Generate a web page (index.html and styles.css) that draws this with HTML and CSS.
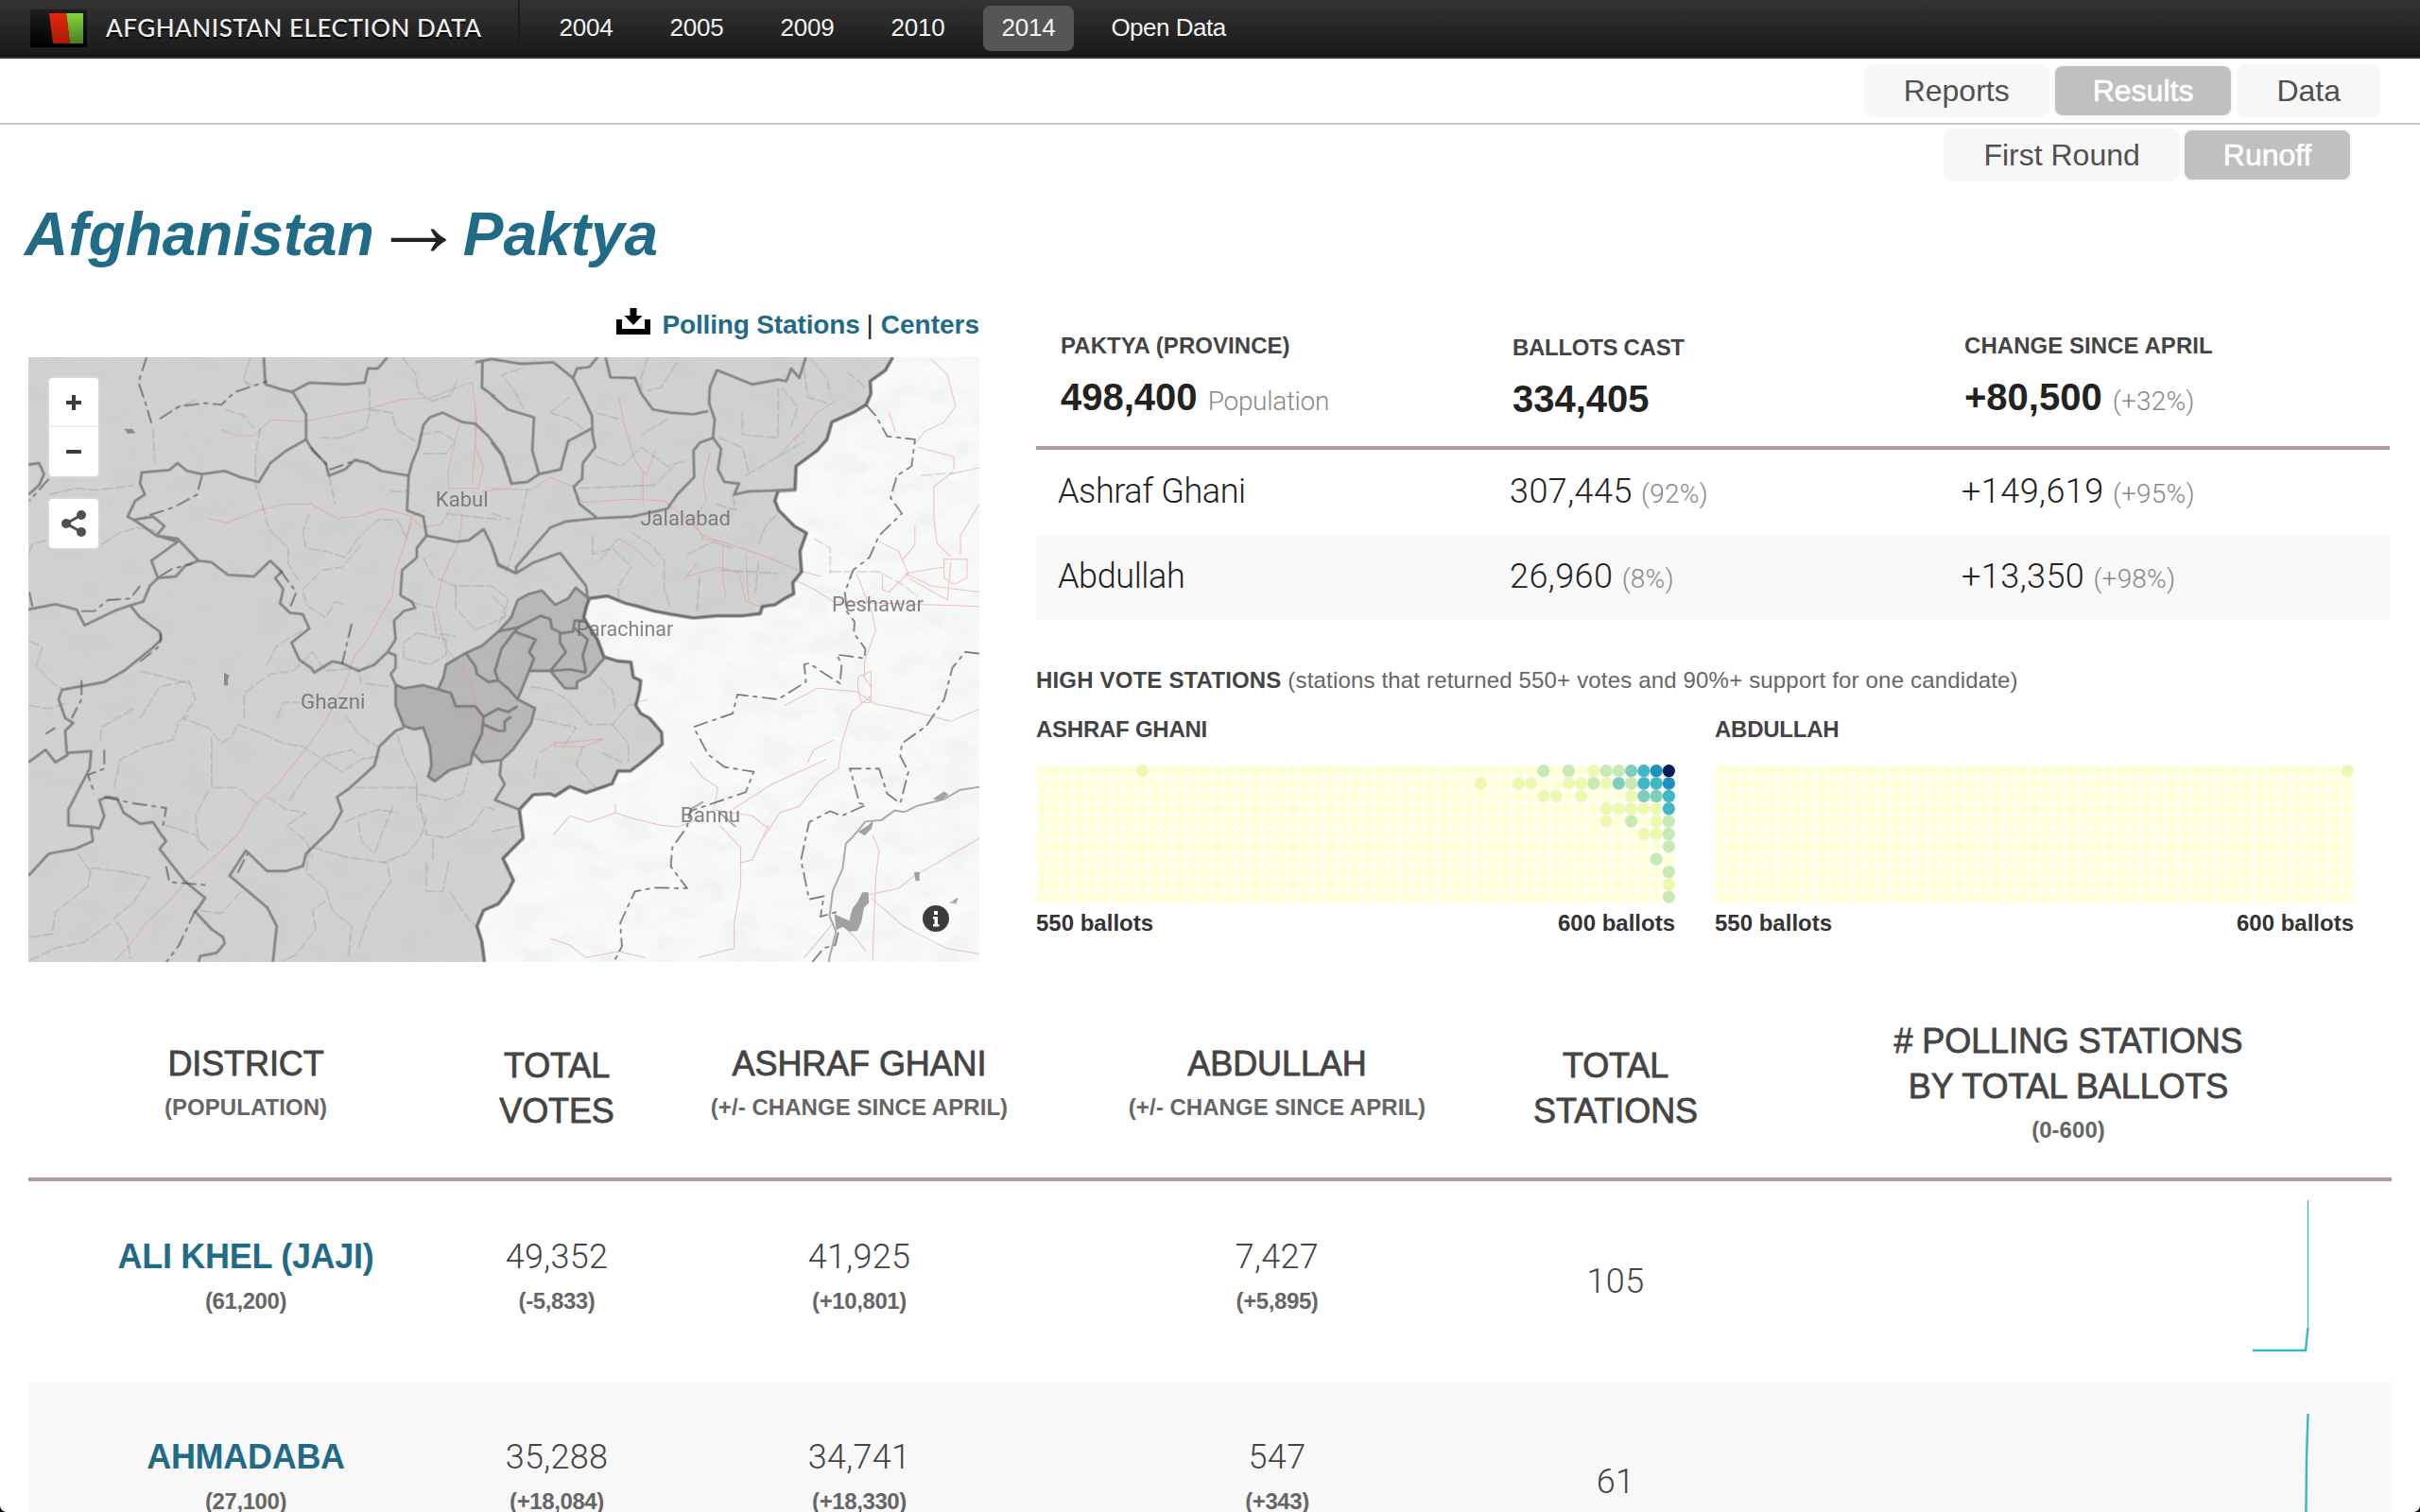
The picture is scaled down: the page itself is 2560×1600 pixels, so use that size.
FILE: index.html
```html
<!DOCTYPE html>
<html lang="en">
<head>
<meta charset="utf-8">
<title>Afghanistan Election Data</title>
<link rel="stylesheet" href="styles.css">
</head>
<body>
<header class="topbar">
  <a class="brand">
    <svg class="brand-logo" viewBox="0 0 60 40">
      <defs>
        <linearGradient id="k" x2="0" y2="1"><stop stop-color="#1e1e1e"/><stop offset="1" stop-color="#000"/></linearGradient>
        <linearGradient id="r" x2="0" y2="1"><stop stop-color="#e3260c"/><stop offset="1" stop-color="#ab1a06"/></linearGradient>
        <linearGradient id="g" x2="0" y2="1"><stop stop-color="#82d738"/><stop offset="1" stop-color="#4b7c25"/></linearGradient>
      </defs>
      <rect width="60" height="40" fill="url(#k)"/><path d="M38 4h18v32H42z" fill="url(#g)"/><path d="M20 4h18l4 32H24z" fill="url(#r)"/>
    </svg>
    <span class="brand-name">AFGHANISTAN ELECTION DATA</span>
  </a>
  <nav class="years">
    <a>2004</a><a>2005</a><a>2009</a><a>2010</a><a class="current">2014</a><a class="open">Open Data</a>
  </nav>
</header>
<nav class="tabs tabs-main"><a>Reports</a><a class="on">Results</a><a>Data</a></nav>
<nav class="tabs tabs-round"><a>First Round</a><a class="on">Runoff</a></nav>
<h1 class="crumbs"><a>Afghanistan</a><span class="arrow">→</span><a>Paktya</a></h1>
<main class="overview">
  <section class="map-col">
    <div class="downloads">
      <svg class="dl-icon" viewBox="0 0 36 28"><path d="M0 12h6v10h24V12h6v16H0z"/><path d="M14.500 0h7v8h6L18 18 8.500 8h6z"/></svg>
      <a>Polling Stations</a><span class="bar">|</span><a class="centers">Centers</a>
    </div>
    <div class="map">
      <svg class="map-art" viewBox="87 204 2921 1920" preserveAspectRatio="none">
        <defs>
          <filter id="relief" x="0" y="0" width="100%" height="100%">
            <feTurbulence type="fractalNoise" baseFrequency="0.009 0.014" numOctaves="4" seed="8"/>
            <feColorMatrix values="0 0 0 0 .35  0 0 0 0 .37  0 0 0 0 .37  .7 .5 0 0 -.5"/>
          </filter>
        </defs>
        <rect x="87" y="204" width="2921" height="1920" fill="#f8f9f9"/>
        <rect x="87" y="204" width="2921" height="1920" filter="url(#relief)" opacity=".2"/>
        <path class="country" d="M87 204H2742L2720 245 2673 280 2675 320 2660 355 2620 380 2555 410 2540 465 2510 500 2445 550 2442 625 2390 628 2380 660 2392 690 2440 740 2477 762 2457 820 2462 885 2435 920 2438 955 2410 970 2380 990 2342 995 2335 1018 2280 1025 2200 1025 2130 1032 2060 1020 2010 1010 1960 995 1920 985 1865 962 1810 970 1800 1000 1793 1030 1810 1060 1835 1100 1855 1155 1895 1168 1938 1172 1945 1220 1968 1230 1965 1260 1953 1310 1968 1335 1995 1350 2032 1395 2034 1432 2000 1465 1965 1495 1935 1518 1898 1517 1880 1558 1800 1587 1750 1567 1705 1597 1690 1590 1638 1593 1595 1640 1607 1730 1545 1795 1577 1865 1560 1900 1530 1940 1485 1960 1465 2010 1480 2060 1488 2124H87z"/>
        <path class="province" d="M1215 1243L1240 1255 1300 1245 1345 1258 1362 1220 1370 1180 1430 1143 1480 1120 1530 1075 1570 1030 1590 975 1625 955 1665 945 1705 990 1745 970 1768 935 1808 970 1793 1030 1835 1100 1855 1160 1810 1215 1772 1235 1772 1250 1735 1255 1690 1200 1625 1200 1590 1290 1643 1318 1630 1370 1575 1450 1540 1483 1480 1490 1452 1460 1445 1495 1380 1515 1335 1550 1315 1535 1325 1500 1320 1440 1300 1380 1270 1385 1240 1375 1215 1310z"/>
        <path class="haze" d="M1215 1243L1240 1255 1300 1245 1345 1258 1385 1270 1400 1312 1460 1312 1485 1345 1480 1400 1452 1460 1445 1495 1380 1515 1335 1550 1315 1535 1325 1500 1320 1440 1300 1380 1270 1385 1240 1375 1215 1310z"/>

        <g class="road">
          <path d="M680 435l50 18 50 0 50-50 100 5 100-20 100-20 100-30 90-5 130-50 15 120-15 200M1410 420l-35 150 5 50 90 0 15-70-25-60 0-120M1480 630l90-10"/>
          <path d="M635 715l60 15 100-40 80-20 80 0 80 45 60-5 80-25 80 20 40 40 60-10 30-50M1420 700l-10 90-50 110-20 100 25 120 65 90 30 80 0 60 70 60"/>
          <path d="M1265 730L1215 880 1205 960 1130 1100 1085 1160 1060 1240 1000 1360 930 1460 850 1560 780 1630 730 1720 660 1790 580 1860 520 1930 440 2010 400 2070 350 2120M1250 770l15-60 40-20"/>
          <g transform="translate(1510 0)">
            <path d="M0 620l120 5 60-40 70 30 30 50 140-10 110 5 60 50 60 60 200 70 90 40 70 20M390 330l20 100 30 100 35 50 30-90M465 570v100M670 510l-20 90 10 60-40 60 30 60 60 10 0 120 10 60M600 900l100-30 60 20 20 90 60 20M590 910l40-50M780 830l10 150M930 470l70-90 60-40M880 520l60-70M330 850l60-70 50 30 60 60M930 910l60 30 60 40 450 15M1350 210l50 50 25 100-35 50-60 30-30 40M1220 380l20 60M1310 490l110 30v40M1498 555l-90 20-50 40 0 100 10 80 40 40M1440 830l0-60 58-100M1190 790l60 30 30 70-60 60-20-10 0-50M1300 740v60l-40 50M1120 890l50 130 5 30M1390 845h70v60l-40 20-30-20zM1270 890l120-20M1270 890l80 40 150 20M1280 905l120 70 10-120"/>
            <path d="M900 1310l100-55 120 10 60 40 100 20 130 35 90-40M1175 1050l5 20-35 100 0 50 20 30 0 30-60 50-30 100-10 80-60 40-60 80-60 20-50 80M1050 1420l-60 30-20 40M610 1490l40 50 45 30-10 60M190 1720l50-60 60 20 80-30 60 20 80 20 50 5 70-25M380 1620v30M700 1690l65 70 0 120-20 120 0 80-110 30M850 1690l-50 110-40 10M1030 1480l-170 80-120 80M680 1640l120 20 50 40M180 2050l60 20 50 40 100-20 80 20M1170 1720l20 50-10 80-10 270M1165 1920l100 90 130 70 110 20M1160 1910l90-20 50-40 100-60 100-60M960 2110l90-110M1060 1990l60 60 30 40M145 1460l50-30 150-15-60 25-90 0 0-20M1125 1250l0-30 40-20 0 100-30 0z"/>
          </g>
        </g>

        <g class="minor">
          <path d="M770 204l-20 60 10 30M600 340l-70 30 0 0M470 430l5 110M150 640l80-20 60 5 60-5 60-10M310 800l60-40 50-15 60 10M90 825l10-30 50-10M800 430l-15 80 0 100 20 60 20 80 60 60 0 50 30 50M1135 300l0 80-10 50-80 30-70 0M1135 370l70 10 10 50 60 40M690 370l60 20 30 40M1235 204l40 50 10 60 40 30 60-20 20-50M1010 580l20 90M1290 450l60-10 50 30-30 40-80 0M1200 630h50M950 700l-20 60 10 50 60 10 60 20 40-60 60-60 60 0 30 60M1110 800l-60 70-60 10-60 60 10 50 60 40 30-50 30 10M1400 930l0 70 60 70 90-40 10-60-50-40zM1260 980l70 20 10 80 60 10M1300 840l30 60 70 30M1370 700l80 10 90 10M750 280l30 15M1280 1080l90 20 0 50-50 30-80-20 0-50z"/>
          <path d="M90 1105l40 20-20 60 60 60 20 10M90 1310l60 10 60-20M430 1350l60-100 90-20 20 60-40 60 80 30 40 50 30-20 20-40 80 30 60 30 60 10 60 40 60 40 60-40 60-10M430 1200l80 20 70 20M310 1420l0-40 100-60M350 1570l20-90 80-40 80-20 20-60 30-20M650 1410l0 160 80 0 60 50M640 1580l-40 80 10 80 30 30M510 1690l90 30 40 50M750 1350l0-80 80-60 70-10 60-60 40 60 100-10 10 50M820 1180l30-60 80-50M1120 1240l80 10M850 1350l20-50 50 0M1060 1340l40 60 60 40M890 1610l50-80 60-60 80-20 20 20M820 1600l60 40 60 10-60 40 60 50 20 50M960 1760l100 30 130 20 10 60-60 90-40 120M950 1760l-10 80 60 50 20 70 60 50-10 100M1000 1930l-40 30 10 60-60 80-40 20M1090 1570h190v60l30 40-20 60-40 50-80 30 0 0M1060 1680l40-20 60-20 60 10M1100 1680l10 60 40 40 60-160M1220 1400l20 70 40 80 0 40 90 20 50-20 20-70M1290 1620l20 100 60 10 80-40 40-60 30 10M1330 1730v70M1310 1810v90h50l20-100M1380 1900l60 90 20 20M90 2045l70-10 10-70 100-80 10-60 80 10 100 20-50 80-60 50 40 60 10 70M240 1780l40 60M90 2120l80-40 90-20 80-60M740 1900l-60 70-70-10"/>
          <g transform="translate(1510 0)">
            <path d="M90 240l-60 20 40 50 30 60M180 380l60 20 40 30M240 330l-60 50M480 204l-20 60 0 40M570 220l-50 80-40 10M880 300l0 160-110-10 0-70M890 300l50 60-20 60M700 460l70 30 20 80M320 520l80 30 60-60 80 60 60-20M540 400l-80 50M270 620l230-10 60-60M320 380l70 20M780 580l100-60 80-50M960 240l10 90 60 20M980 210l50 60 10 50M1090 250l60 50M110 620l-30 150-40 130M0 700l60 20M310 770l0 60 60-20 60 60-40 60 0 50M430 760l60 40 40 50 0 90 20 60M600 830l80-40 60 20M640 900l-10 110M820 800l20-60 40-40M820 850l-10 100M700 880l180 10M740 640l10 50-60-20M990 780l50 30 0 80M0 960l40 40-20 60M1040 885l150 0 70 40 50 40M1320 580l100-10"/>
            <path d="M120 1250l60 10 50 30 70 80 70 0 50-60 60-20M330 1220l40 40 10 60M130 1350l130 30-40 60M280 1440l-20 60 60 70 30 0M370 1370l50 60 0 60M340 1460l60 30M140 1480l-10 60M0 1710l90-20"/>
          </g>
        </g>

        <g class="province-line">
          <path d="M810 204L815 290 860 305 900 315 940 385 940 465 880 500 830 540 795 600 740 585 690 565 620 575 575 565 545 540 520 562 435 570 430 605 445 640 415 660 392 710 410 720 470 710 505 740 480 770 545 790 465 850 485 905 460 930 440 980 400 992 350 1010 260 1055 235 1005 170 988 87 1005M410 720L440 740 480 770 545 780 610 850M485 905L540 900 570 865 610 850 650 855 700 895 780 900 830 850 865 885 845 905 870 940 860 985 890 1015 930 1020 950 1065 895 1110 920 1165 955 1190 965 1205 1020 1170 1050 1175 1100 1200 1150 1180 1190 1140 1215 1100 1210 1040 1240 1010 1275 1000 1265 980 1230 960 1235 880 1280 840 1280 810 1310 770 1300 710 1250 690 1255 580"/>
          <path d="M940 465L960 500 1000 540 1010 580 1060 560 1090 530 1130 540 1170 565 1255 580 1265 540 1285 490 1300 420 1320 395 1360 380 1420 410 1460 415 1500 455 1540 510 1570 600M895 315L950 285 1060 290 1120 285 1130 240 1160 240 1190 204M1310 770L1400 790 1440 785 1485 750 1510 800 1530 865 1585 890M1460 220L1510 210M1482 215L1480 300 1520 330"/>
          <path d="M87 545L120 540 135 575 120 610 87 640M400 992L430 1030 490 1075 495 1100 470 1125 380 1200 320 1235 190 1260 180 1290 200 1350 225 1365 200 1390 205 1460 280 1455 275 1510 210 1640 210 1690 280 1695 285 1740 230 1765 150 1780 87 1850M87 1490L140 1450 170 1490 210 1465M280 1695L305 1700 320 1660 305 1610 330 1600 360 1605 380 1650 430 1685 470 1680 495 1720 510 1740 490 1765 570 1870 630 1920 600 1965 650 2020 685 2045 690 2065 665 2095 615 2105 610 2124"/>
          <path d="M1190 1140L1215 1150 1215 1190 1200 1210 1215 1243M1240 1380L1215 1390 1165 1440 1150 1500 1070 1575 1035 1600 1050 1645 1020 1700 940 1780 930 1820 880 1835 820 1835 755 1770 705 1850 820 1950 850 2010 838 2124"/>
          <path class="heavy" d="M2742 204L2720 245 2673 280 2675 320 2660 355 2620 380 2555 410 2540 465 2510 500 2445 550 2442 625 2390 628 2380 660 2392 690 2440 740 2477 762 2457 820 2462 885 2435 920 2438 955 2410 970 2380 990 2342 995 2335 1018 2280 1025 2200 1025 2130 1032 2060 1020 2010 1010 1960 995 1920 985 1865 962 1810 970 1800 1000 1793 1030 1810 1060 1835 1100 1855 1155 1895 1168 1938 1172 1945 1220 1968 1230 1965 1260 1953 1310 1968 1335 1995 1350 2032 1395 2034 1432 2000 1465 1965 1495 1935 1518 1898 1517 1880 1558 1800 1587 1750 1567 1705 1597 1690 1590 1638 1593 1595 1640 1607 1730 1545 1795 1577 1865 1560 1900 1530 1940 1485 1960 1465 2010 1480 2060 1488 2124"/>
          <g transform="translate(1510 0)">
            <path d="M0 210L90 225 190 220 250 270 280 330 308 390 310 450 318 490 280 540 278 590 252 615 270 670 325 715 430 710 540 685 570 640 622 585 620 500 640 475 680 460 685 400 668 350 670 300 692 245 800 290 880 275 905 280 920 240 945 270 965 204M350 204L365 268 440 270 460 320 495 370 550 380 620 385 665 375M250 270L262 240 300 235 325 204M680 460L705 495 695 560 715 600 760 605 745 640 790 630 930 625M308 430L235 470 212 560 145 575 110 600 60 605 35 520 0 475M0 325L50 370 130 395 125 500 145 575M325 715L230 725 180 745 75 870 75 890 20 860 0 800M75 890L130 855 210 825 290 930 295 965"/>
            <path d="M30 1480L25 1530 40 1560 10 1610 85 1640"/>
          </g>
          <path d="M1215 1243L1240 1255 1300 1245 1345 1258 1362 1220 1370 1180 1430 1143 1480 1120 1530 1075 1570 1030 1590 975 1625 955 1665 945 1705 990 1745 970 1768 935 1808 970M1855 1160L1810 1215 1772 1235 1772 1255 1735 1255 1690 1200 1625 1200 1590 1290 1643 1318 1630 1370 1575 1450 1540 1483 1480 1490 1452 1460 1445 1495 1380 1515 1335 1550 1315 1535 1325 1500 1320 1440 1300 1380 1270 1385 1240 1375 1215 1310 1215 1243"/>
          <path d="M1345 1258L1385 1270 1400 1312 1460 1312 1485 1345 1480 1400 1452 1460M1485 1345L1530 1320 1560 1330 1590 1312M1485 1370L1530 1390 1550 1390 1550 1360 1570 1345M1430 1143L1460 1185 1465 1210 1500 1235 1530 1230 1560 1255 1590 1290M1530 1230L1520 1200 1540 1130 1580 1075M1580 1075L1645 1100 1625 1140 1640 1160 1625 1200M1530 1075L1595 1060 1660 1025 1690 1035 1695 1065 1725 1080 1760 1075 1765 1040 1795 1040M1595 1060L1580 1075M1720 1075L1720 1110 1738 1140 1690 1200 1750 1195 1800 1205M1765 1065L1805 1100 1790 1150 1800 1205"/>
        </g>

        <g class="dashes">
          <path d="M450 204l-25 80 20 60 20 70M490 400l60-40 80-10 50 5 40-40 100-35M620 580l-15 60-70 40-90 30M490 900l40-25 60-15M90 950l10 50M150 590l-60 70M250 1010l40 0 40-35 70-5 30-40M860 880l50 70-20 50M955 490l60 70 80-30M1080 1050l-30 130M250 1230l0 60-30 60M140 1400l30-20M320 1450l0 60-50 20 20 60M320 1600l90 20 100 15-10 60M510 1820l10 50 120 10M600 1960l-50 110-40 55M730 1840l30-60M430 1170l60-50 5-40"/>
          <g transform="translate(1510 0)">
            <path d="M1150 355L1180 390 1215 455 1300 465 1290 550 1245 580 1225 650 1260 700 1190 770 1160 840 1110 880 1085 950 1090 1010 1115 1045 1112 1080 1148 1130 1145 1160 1060 1148 1075 1180 1070 1240 1010 1200 975 1175 960 1180 965 1235 880 1290 755 1275 740 1335 620 1378 665 1465 715 1505 805 1520 780 1585 680 1620 610 1645 600 1695 555 1760 550 1820 600 1890 500 1888 440 1900 395 2000 400 2075 375 2124"/>
            <path d="M1498 1145L1455 1140 1415 1190 1390 1290 1335 1375 1260 1430 1255 1470 1280 1520 1255 1620 1215 1590 1190 1510 1100 1510 1130 1620 1150 1625 1075 1660 1040 1645 975 1680 950 1800 975 1925 1020 1915 1010 1980 1060 1965M1065 2030L1055 2070 1020 2080 985 2124"/>
          </g>
        </g>
        <g transform="translate(1510 1050)" class="river"><path d="M1498 518l-60 10-50 30-80 20-40 20-30-5-40 30-50 5-40 50-20 20-10 80-30 70-10 80 20 50-20 80-10 66"/><path class="lake" d="M1055 925l20 10 25 10 10-40 15-20 15-30 15 0 2 30-15 15-8 45-12 28-22 2-20-15-20 10zM1130 660l30-20 10-12-5 22-20 20zM1360 555l30-20 10 8-25 18zM1300 790h12v25h-8zM1410 885l20-12-5 14z"/><path d="M610 590l40-25M700 600l50 45"/></g>
        <path class="lake" d="M690 1208l12 8-4 10v18h-8v-26zM385 433h20l8 10-20 2z"/>
        <g class="town">
          <text x="1338" y="678" textLength="162" lengthAdjust="spacingAndGlyphs">Kabul</text>
          <text x="1967" y="738" textLength="277" lengthAdjust="spacingAndGlyphs">Jalalabad</text>
          <text x="1770" y="1088" textLength="298" lengthAdjust="spacingAndGlyphs">Parachinar</text>
          <text x="2555" y="1012" textLength="282" lengthAdjust="spacingAndGlyphs">Peshawar</text>
          <text x="923" y="1320" textLength="199" lengthAdjust="spacingAndGlyphs">Ghazni</text>
          <text x="2090" y="1680" textLength="184" lengthAdjust="spacingAndGlyphs">Bannu</text>
        </g>
      </svg>
      <div class="map-controls">
        <div class="zoomer">
          <svg viewBox="0 0 52 50"><path d="M18 24h6v-6h4v6h6v4h-6v6h-4v-6h-6z"/></svg>
          <svg viewBox="0 0 52 50"><rect x="18" y="23" width="16" height="4" rx="1"/></svg>
        </div>
        <div class="share"><svg viewBox="0 0 52 52"><path d="M18 26L34 17M18 26l16 9" stroke="#505050" stroke-width="3"/><g fill="#505050"><circle cx="18" cy="26" r="5"/><circle cx="34" cy="17" r="5"/><circle cx="34" cy="35" r="5"/></g></svg></div>
      </div>
      <svg class="map-info" viewBox="0 0 52 52"><circle cx="26" cy="26" r="26" fill="#fff" opacity=".3"/><circle cx="26" cy="26" r="14" fill="#3b3b3b"/><path d="M24 18h4v4h-4zM23 24h5v8h1.500v2.500h-6.500v-2.500h1.500v-5.500h-1.500z" fill="#fff"/></svg>
    </div>
  </section>

  <section class="stats-col">
    <div class="stats-head">
      <div><div class="label">PAKTYA (PROVINCE)</div><div class="value"><b>498,400</b> <span class="word">Population</span></div></div>
      <div class="lower"><div class="label">BALLOTS CAST</div><div class="value"><b>334,405</b></div></div>
      <div><div class="label">CHANGE SINCE APRIL</div><div class="value"><b>+80,500</b> <span>(+32%)</span></div></div>
    </div>
    <div class="stats-row"><div class="name">Ashraf Ghani</div><div>307,445 <span>(92%)</span></div><div>+149,619 <span>(+95%)</span></div></div>
    <div class="stats-row shaded"><div class="name">Abdullah</div><div>26,960 <span>(8%)</span></div><div>+13,350 <span>(+98%)</span></div></div>

    <p class="note"><b>HIGH VOTE STATIONS</b> <span>(stations that returned 550+ votes and 90%+ support for one candidate)</span></p>
    <div class="charts">
      <figure class="chart">
        <figcaption>ASHRAF GHANI</figcaption>
        <svg viewBox="0 0 51 11" preserveAspectRatio="none">
          <defs><pattern id="dot" width="1" height="1" patternUnits="userSpaceOnUse"><circle cx=".5" cy=".5" r=".5"/></pattern></defs>
          <rect width="51" height="11" fill="url(#dot)" class="base"/>
          <g class="c1"><circle cx="8.500" cy=".5" r=".5"/><circle cx="44.500" cy=".5" r=".5"/><circle cx="35.500" cy="1.500" r=".5"/><circle cx="38.500" cy="1.500" r=".5"/><circle cx="39.500" cy="1.500" r=".5"/><circle cx="42.500" cy="1.500" r=".5"/><circle cx="43.500" cy="1.500" r=".5"/><circle cx="45.500" cy="1.500" r=".5"/><circle cx="40.500" cy="2.500" r=".5"/><circle cx="41.500" cy="2.500" r=".5"/><circle cx="43.500" cy="2.500" r=".5"/><circle cx="47.500" cy="2.500" r=".5"/><circle cx="45.500" cy="3.500" r=".5"/><circle cx="46.500" cy="3.500" r=".5"/><circle cx="47.500" cy="3.500" r=".5"/><circle cx="48.500" cy="3.500" r=".5"/><circle cx="49.500" cy="3.500" r=".5"/><circle cx="45.500" cy="4.500" r=".5"/><circle cx="49.500" cy="4.500" r=".5"/><circle cx="48.500" cy="5.500" r=".5"/><circle cx="49.500" cy="5.500" r=".5"/><circle cx="50.500" cy="9.500" r=".5"/></g>
          <g class="c2"><circle cx="40.500" cy=".5" r=".5"/><circle cx="42.500" cy=".5" r=".5"/><circle cx="45.500" cy=".5" r=".5"/><circle cx="46.500" cy=".5" r=".5"/><circle cx="44.500" cy="1.500" r=".5"/><circle cx="47.500" cy="1.500" r=".5"/><circle cx="47.500" cy="4.500" r=".5"/><circle cx="50.500" cy="4.500" r=".5"/><circle cx="50.500" cy="5.500" r=".5"/><circle cx="50.500" cy="6.500" r=".5"/><circle cx="49.500" cy="7.500" r=".5"/><circle cx="50.500" cy="8.500" r=".5"/><circle cx="50.500" cy="10.500" r=".5"/></g>
          <g class="c3"><circle cx="47.500" cy=".5" r=".5"/><circle cx="46.500" cy="1.500" r=".5"/><circle cx="48.500" cy="2.500" r=".5"/><circle cx="49.500" cy="2.500" r=".5"/></g>
          <g class="c4"><circle cx="48.500" cy=".5" r=".5"/><circle cx="48.500" cy="1.500" r=".5"/><circle cx="49.500" cy="1.500" r=".5"/><circle cx="50.500" cy="2.500" r=".5"/><circle cx="50.500" cy="3.500" r=".5"/></g>
          <g class="c5"><circle cx="49.500" cy=".5" r=".5"/><circle cx="50.500" cy="1.500" r=".5"/></g>
          <circle class="c6" cx="50.500" cy=".5" r=".5"/>
        </svg>
        <div class="axis"><span>550 ballots</span><span>600 ballots</span></div>
      </figure>
      <figure class="chart">
        <figcaption>ABDULLAH</figcaption>
        <svg viewBox="0 0 51 11" preserveAspectRatio="none"><rect width="51" height="11" fill="url(#dot)" class="base"/><circle class="c1" cx="50.500" cy=".5" r=".5"/></svg>
        <div class="axis"><span>550 ballots</span><span>600 ballots</span></div>
      </figure>
    </div>
  </section>
</main>

<section class="table">
  <div class="thead">
    <div>DISTRICT<small>(POPULATION)</small></div>
    <div class="two">TOTAL<br>VOTES</div>
    <div>ASHRAF GHANI<small>(+/- CHANGE SINCE APRIL)</small></div>
    <div>ABDULLAH<small>(+/- CHANGE SINCE APRIL)</small></div>
    <div class="two">TOTAL<br>STATIONS</div>
    <div># POLLING STATIONS<br>BY TOTAL BALLOTS<small>(0-600)</small></div>
  </div>
  <div class="trow">
    <div><a>ALI KHEL (JAJI)</a><small>(61,200)</small></div>
    <div>49,352<small>(-5,833)</small></div>
    <div>41,925<small>(+10,801)</small></div>
    <div>7,427<small>(+5,895)</small></div>
    <div class="single">105</div>
    <div class="spark"><svg viewBox="0 0 60 162"><path d="M0 160H56L58.500 136"/><path class="thin" d="M58.500 136V1"/></svg></div>
  </div>
  <div class="trow shaded">
    <div><a>AHMADABA</a><small>(27,100)</small></div>
    <div>35,288<small>(+18,084)</small></div>
    <div>34,741<small>(+18,330)</small></div>
    <div>547<small>(+343)</small></div>
    <div class="single">61</div>
    <div class="spark"><svg viewBox="0 0 60 162"><path d="M0 160H56L57 63 58.500 15"/></svg></div>
  </div>
</section>
</body>
</html>
```
FILE: styles.css
```css
* { box-sizing: border-box; }
html { background: #000; }
body { margin: 0; width: 2560px; height: 1600px; overflow: hidden; background: #fff; border-radius: 0 0 7px 7px; color: #222; font-family: "Liberation Sans", Arial, sans-serif; }
a { color: inherit; text-decoration: none; }

.topbar { display: flex; height: 62px; background: linear-gradient(#333, #1a1a1a 58px, #111 60px, #333 60px); color: #f2f2f2; }
.brand { display: flex; align-items: flex-start; width: 550px; height: 50px; padding: 10px 0 0 32px; border-right: 2px solid #1c1c1c; }
.brand-logo { width: 60px; height: 40px; }
.brand-name { margin-left: 20px; font: 500 26px/40px Lato, sans-serif; margin-top: -1px; letter-spacing: .5px; color: #eee; text-shadow: 0 2px 0 #000; white-space: nowrap; }
.years { display: flex; padding: 6px 0 0 22px; font-size: 26px; line-height: 47px; letter-spacing: -.2px; }
.years a { width: 96px; height: 48px; margin-right: 21px; border-radius: 8px; text-align: center; }
.years .current { background: #565656; }
.years .open { width: 158px; letter-spacing: -.5px; }

.tabs { display: flex; justify-content: flex-end; gap: 3px; font-size: 32px; line-height: 52px; color: #505050; }
.tabs a { height: 56px; padding: 0 40px; border: 2px solid #f7f7f7; border-radius: 10px; background: #f7f7f7; }
.tabs .on { background: #c0c0c0; color: #fff; -webkit-text-stroke: .6px #fff; }
.tabs-main { height: 70px; gap: 4px; padding: 6px 42px 0 0; border-bottom: 2px solid #ccc; }
.tabs-round { padding: 4px 72px 0 0; }
.tabs-round a { padding: 0 40.5px; }

.crumbs { display: flex; align-items: baseline; height: 64px; margin: 12px 0 56px 26px; font: italic bold 64px/64px "Liberation Sans", Arial, sans-serif; color: #1f6b88; }
.crumbs .arrow { width: 94px; color: #222; font: 98px/64px "Liberation Sans", Arial, sans-serif; display: flex; justify-content: center; }

.overview { display: grid; grid-template-columns: 1006px 1432px; gap: 60px; padding-left: 30px; height: 694px; }
.downloads { display: flex; justify-content: flex-end; height: 54px; font-weight: bold; font-size: 28px; line-height: 40px; color: #1f6b88; letter-spacing: -.15px; }
.dl-icon { width: 36px; height: 28px; margin: 2px 12px 0 0; fill: #000; }
.bar { font-weight: normal; color: #222; margin: 0 8px 0 7px; }
.centers { letter-spacing: 0; }

.map { position: relative; width: 1006px; height: 640px; overflow: hidden; }
.map-art { display: block; width: 1006px; height: 640px; }
.map-art path { fill: none; }
.map-art .country { fill: #a9aaaa; fill-opacity: .5; }
.map-art .province { fill: #8a8a8a; fill-opacity: .34; }
.map-art .haze { fill: #8a8a8a; fill-opacity: .15; }
.road { stroke: #e9918a; stroke-width: 3; opacity: .55; }
.minor { stroke: #777; stroke-width: 2.500; stroke-dasharray: 34 7; opacity: .5; }
.province-line { stroke: #666; stroke-width: 8; stroke-linejoin: round; opacity: .72; }
.heavy { stroke: #444; stroke-width: 10; }
.dashes { stroke: #555; stroke-width: 5; stroke-dasharray: 46 14 14 14; opacity: .8; }
.river { stroke: #999; stroke-width: 6; opacity: .8; }
.map-art .lake { fill: #8c8c8c; stroke: #8c8c8c; stroke-width: 4; }
.town { font: 67px Roboto, sans-serif; fill: #666; fill-opacity: .8; }
.map-controls { position: absolute; left: 22px; top: 22px; width: 52px; }
.map-controls svg { display: block; width: 52px; }
.zoomer, .share { background: #fff; border-radius: 4px; box-shadow: 0 0 0 2px rgba(255,255,255,.15); }
.zoomer { height: 104px; margin-bottom: 24px; fill: #3b3b3b; }
.zoomer svg { height: 52px; }
.zoomer svg:first-child { border-bottom: 2px solid #eee; }
.share { height: 52px; }
.map-info { position: absolute; left: 934px; top: 568px; width: 52px; height: 52px; }

.stats-head { display: grid; grid-template-columns: repeat(3, 478px); width: 1432px; height: 152px; padding: 26px 0 0 26px; border-bottom: 4px solid #af99a9; }
.label { font-weight: bold; font-size: 24px; line-height: 32px; margin-bottom: 14px; color: #444; letter-spacing: .05px; }
.lower { padding-top: 2px; }
.lower .label { letter-spacing: -.3px; }
.value { font-size: 40px; line-height: 48px; white-space: nowrap; }
.value span, .stats-row span { font: 300 28px Roboto, sans-serif; color: #888; letter-spacing: .2px; }
.value .word { letter-spacing: -.3px; }
.stats-row { display: grid; grid-template-columns: repeat(3, 478px); width: 1432px; height: 90px; padding-left: 23px; overflow: hidden; font: 300 36px/88px Roboto, sans-serif; letter-spacing: .45px; }
.stats-row .name { letter-spacing: -.4px; }
.shaded { background: #f8f8f8; }
.note { margin: 48px 0 20px; font-size: 24px; line-height: 32px; color: #666; letter-spacing: .17px; white-space: nowrap; }
.note b { color: #444; }
.charts { display: grid; grid-template-columns: 676px 676px; gap: 42px; }
.chart { margin: 0; }
.chart figcaption { font-weight: bold; font-size: 24px; line-height: 32px; color: #444; margin-bottom: 21px; letter-spacing: -.25px; }
.chart svg { display: block; width: 676px; height: 147px; }
pattern circle { fill: #ffffd9; }
.c1 { fill: #edf8b1; } .c2 { fill: #c7e9b4; } .c3 { fill: #7fcdbb; } .c4 { fill: #41b6c4; } .c5 { fill: #1d91c0; } .c6 { fill: #081d58; }
.axis { display: flex; justify-content: space-between; margin-top: 5px; font-weight: bold; font-size: 24px; line-height: 32px; color: #333; }

.table { margin: 36px 0 0 30px; width: 2500px; text-align: center; color: #444; }
.thead, .trow { display: grid; grid-template-columns: 460px 198px 442px 442px 274px 684px; align-items: center; font-size: 36px; line-height: 48px; }
.thead { height: 196px; padding-bottom: 2px; border-bottom: 4px solid #af99a9; -webkit-text-stroke: .8px #444; letter-spacing: -.1px; }
.two { padding-top: 5px; }
small { display: block; font: bold 24px/46px "Liberation Sans", Arial, sans-serif; color: #666; -webkit-text-stroke: 0; letter-spacing: -.4px; }
.thead small { line-height: 44px; padding-bottom: 2px; letter-spacing: .05px; }
.trow { height: 212px; padding-bottom: 7px; font: 300 36px/48px Roboto, sans-serif; letter-spacing: .3px; }
.trow a { font: bold 36px/48px "Liberation Sans", Arial, sans-serif; color: #1f6b88; letter-spacing: -.3px; }
.single { padding-top: 6px; }
.spark { align-self: start; padding: 19px 0 0 537px; }
.spark svg { display: block; width: 60px; height: 162px; fill: none; stroke: #41b6c4; stroke-width: 2.500; }
.spark .thin { stroke-width: 1.300; }
```
